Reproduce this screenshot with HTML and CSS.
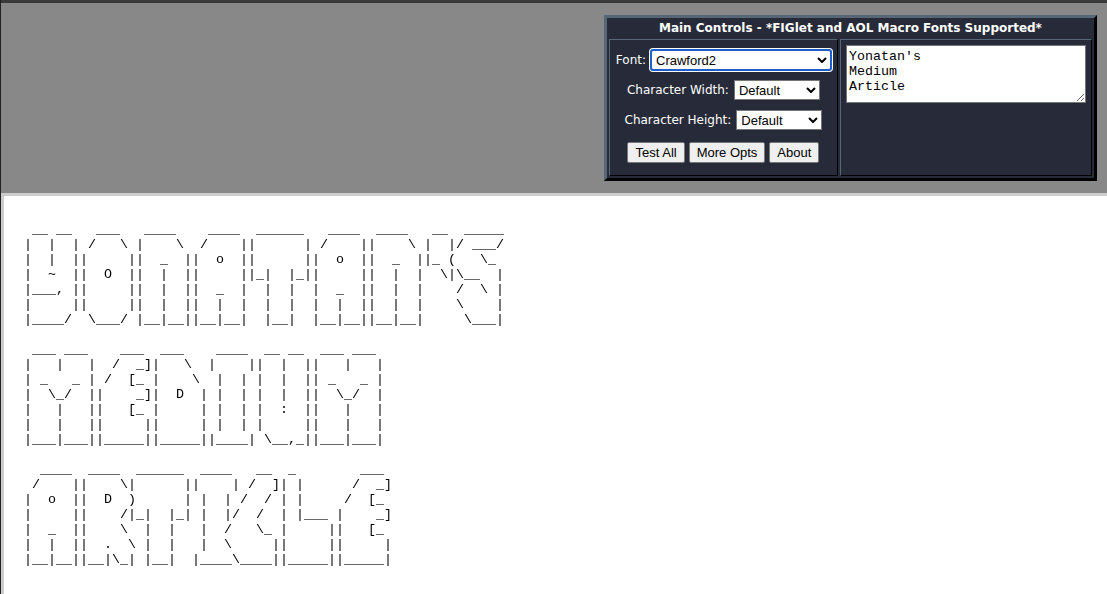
FILE: index.html
```html
<!DOCTYPE html>
<html lang="en">
<head>
<meta charset="utf-8">
<title>Text to ASCII Art Generator</title>
<link rel="stylesheet" href="styles.css">
</head>
<body>
<header class="top">
  <form class="panel">
    <h1 class="panel-title">Main Controls - *FIGlet and AOL Macro Fonts Supported*</h1>
    <div class="cells">
      <div class="cell options">
        <div class="field">
          <label for="font">Font:</label>
          <span class="select-wrap"><select id="font" class="select select-font"><option>Crawford2</option></select><svg class="chevron" viewBox="0 0 10 6"><path d="M1 1l4 4 4-4"/></svg></span>
        </div>
        <div class="field">
          <label for="cw">Character Width:</label>
          <span class="select-wrap"><select id="cw" class="select"><option>Default</option></select><svg class="chevron" viewBox="0 0 10 6"><path d="M1 1l4 4 4-4"/></svg></span>
        </div>
        <div class="field">
          <label for="ch">Character Height:</label>
          <span class="select-wrap"><select id="ch" class="select"><option>Default</option></select><svg class="chevron" viewBox="0 0 10 6"><path d="M1 1l4 4 4-4"/></svg></span>
        </div>
        <div class="buttons">
          <button type="button" class="button">Test All</button>
          <button type="button" class="button">More Opts</button>
          <button type="button" class="button">About</button>
        </div>
      </div>
      <div class="cell source">
        <textarea class="text" aria-label="Text" spellcheck="false">Yonatan's
Medium
Article</textarea>
      </div>
    </div>
  </form>
</header>
<main class="output">
<pre class="art"> __ __   ___   ____    ____  ______   ____  ____   __  _____
|  |  | /   \ |    \  /    ||      | /    ||    \ |  |/ ___/
|  |  ||     ||  _  ||  o  ||      ||  o  ||  _  ||_ (   \_
|  ~  ||  O  ||  |  ||     ||_|  |_||     ||  |  |  \|\__  |
|___, ||     ||  |  ||  _  |  |  |  |  _  ||  |  |    /  \ |
|     ||     ||  |  ||  |  |  |  |  |  |  ||  |  |    \    |
|____/  \___/ |__|__||__|__|  |__|  |__|__||__|__|     \___|

 ___ ___    ___  ___    ____  __ __  ___ ___
|   |   |  /  _]|   \  |    ||  |  ||   |   |
| _   _ | /  [_ |    \  |  | |  |  || _   _ |
|  \_/  ||    _]|  D  | |  | |  |  ||  \_/  |
|   |   ||   [_ |     | |  | |  :  ||   |   |
|   |   ||     ||     | |  | |     ||   |   |
|___|___||_____||_____||____| \__,_||___|___|

  ____  ____  ______  ____   __  _        ___
 /    ||    \|      ||    | /  ]| |      /  _]
|  o  ||  D  )      | |  | /  / | |     /  [_
|     ||    /|_|  |_| |  |/  /  | |___ |    _]
|  _  ||    \  |  |   |  /   \_ |     ||   [_
|  |  ||  .  \ |  |   |  \     ||     ||     |
|__|__||__|\_| |__|  |____\____||_____||_____|</pre>
</main>
</body>
</html>
```
FILE: styles.css
```css
* {
  box-sizing: border-box;
}

body {
  margin: 0;
  min-height: 100vh;
  display: flex;
  flex-direction: column;
  border-left: 1px solid #222;
  background: #fff;
}

.top {
  display: flex;
  justify-content: flex-end;
  padding: 12px 10px;
  border-top: 3px solid #3a3a3a;
  background: #888;
}

.panel {
  padding: 0 2px 2px;
  border: 3px solid;
  border-color: #566878 #000 #000 #566878;
  background: #272b39;
  color: #fff;
  font-family: "DejaVu Sans", Verdana, sans-serif;
  font-size: 12px;
}

.panel-title {
  margin: 0;
  font-family: "DejaVu Sans", Verdana, sans-serif;
  font-size: 12px;
  line-height: 21px;
  text-align: center;
}

.cells {
  display: flex;
  gap: 2px;
}

.cell {
  border: 1px solid;
  border-color: #566878 #000 #000 #566878;
}

.options {
  display: flex;
  flex-direction: column;
  align-items: center;
  gap: 10px;
  padding: 10px 6px 12px;
}

.field {
  display: flex;
  align-items: center;
  gap: 5px;
  line-height: 20px;
}

.select-wrap {
  position: relative;
  display: flex;
}

.select {
  appearance: none;
  width: 86px;
  height: 20px;
  padding: 0 4px;
  border: 1px solid #767676;
  border-radius: 0;
  background: #fff;
  color: #000;
  font: 13px "Liberation Sans", Arial, sans-serif;
}

.select-font {
  width: 180px;
  outline: 2px solid #1f5fcc;
  outline-offset: -1px;
  border-radius: 2px;
  box-shadow: 0 0 0 2px #fff;
}

.chevron {
  position: absolute;
  right: 4px;
  top: 7px;
  width: 10px;
  height: 6px;
  fill: none;
  stroke: #000;
  stroke-width: 2;
  pointer-events: none;
}

.buttons {
  display: flex;
  gap: 4px;
  padding-top: 2px;
}

.button {
  height: 21px;
  padding: 0 7px;
  border: 1px solid #767676;
  border-radius: 2px;
  background: #efefef;
  color: #000;
  font: 13px "Liberation Sans", Arial, sans-serif;
}

.source {
  padding: 5px;
}

.text {
  display: block;
  width: 240px;
  height: 58px;
  padding: 3px 2px;
  border: 1px solid #767676;
  background: #fff;
  color: #000;
  font: 10pt/15px "Liberation Mono", "Courier New", monospace;
}

.output {
  flex: 1;
  padding: 26px 20px;
  border-top: 3px solid #ccc;
  border-left: 3px solid #ccc;
}

.art {
  margin: 0;
  color: #000;
  font: 10pt/15px "Liberation Mono", "Courier New", monospace;
  will-change: opacity;
}
```
